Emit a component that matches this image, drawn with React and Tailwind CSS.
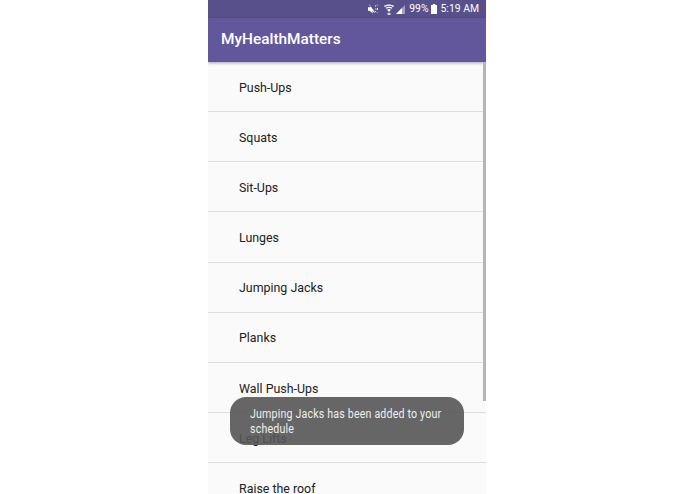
import React from "react";

const exercises = [
  "Push-Ups",
  "Squats",
  "Sit-Ups",
  "Lunges",
  "Jumping Jacks",
  "Planks",
  "Wall Push-Ups",
  "Leg Lifts",
  "Raise the roof",
];

const StatusIcons = () => (
  <div className="flex items-center text-white">
    {/* muted speaker */}
    <svg width="10" height="10" viewBox="0 0 11 10" fill="currentColor">
      <path d="M0 3h2l1-1-2-1.500.6-.5 6 8.500-.8.6L5 7v3L2 7H0z" />
      <path d="M7.500 1.500l1-.6.5.9-1 .6zM8 4.500h1.200v1H8zM7.500 7.700l1-.6.5.9-1 .6zM9.500 .5l.7-.4.5.9-.7.4zM9.800 4h1v2h-1zM9.500 8.900l.7-.4.5.9-.7.4z" />
    </svg>
    {/* wifi */}
    <svg width="10" height="11" viewBox="0 0 10 11" fill="currentColor" className="ml-[6px]">
      <path d="M0 2C2.800 0 7.200 0 10 2l-.7.900C6.800 1.200 3.200 1.200.7 2.900z" />
      <path d="M1.500 3.800c2.200-1.400 4.800-1.400 7 0l-.7.9c-1.700-1.100-3.900-1.100-5.600 0z" />
      <path d="M3 5.600c1.300-.8 2.700-.8 4 0L5 8z" />
      <path d="M3.500 8.800h3V11h-3z" opacity="0.75" />
    </svg>
    {/* signal */}
    <svg width="9" height="9" viewBox="0 0 9 9" fill="currentColor" className="ml-[2px]">
      <path d="M0 9L9 0v9z" opacity="0.45" />
      <path d="M0 9l6-6v6z" />
    </svg>
    <span className="ml-[4px] text-[10.400px] leading-none">99%</span>
    {/* battery */}
    <svg width="6" height="10" viewBox="0 0 6 10" fill="currentColor" className="ml-[2px]">
      <path d="M1.800 0h2.400v1H6v9H0V1h1.800z" />
    </svg>
    <span className="ml-[4px] text-[10.400px] leading-none">5:19 AM</span>
  </div>
);

export default function App() {
  return (
    <div className="flex h-[494px] w-[695px] overflow-hidden bg-white pl-[208px] font-['Roboto',sans-serif]">
      <div className="relative flex h-full w-[278px] flex-col overflow-hidden bg-[#fafafa]">
        <div className="flex h-[18px] shrink-0 items-center justify-end bg-[#57508a] pr-[7px]">
          <StatusIcons />
        </div>
        <div className="flex h-[44px] shrink-0 items-center bg-[#63579c] pl-[13px] text-[15.400px] font-medium text-white shadow-[0_1px_3px_rgba(0,0,0,0.35)]">
          MyHealthMatters
        </div>
        <ul className="flex-1 overflow-hidden">
          {exercises.map((name) => (
            <li
              key={name}
              className="flex h-[50.140px] items-center border-b border-[#dedede] pl-[31px] pt-[3px] text-[12.400px] text-[#212121]"
            >
              {name}
            </li>
          ))}
        </ul>

        {/* scrollbar */}
        <div className="absolute right-0 top-[62px] h-[339px] w-[3px] bg-[#b5b5b5]" />

        {/* toast */}
        <div className="absolute left-[22px] top-[397px] flex h-[48px] w-[234px] items-center overflow-hidden rounded-[16px] bg-[#555555]/90 pl-[20px] pt-[2px]">
          <div className="w-[225px] shrink-0 origin-left scale-x-[0.886] text-[12px] leading-[15px] tracking-[0.2px] text-[#f0f0f0]">
            Jumping Jacks has been added to your schedule
          </div>
        </div>
      </div>
    </div>
  );
}
